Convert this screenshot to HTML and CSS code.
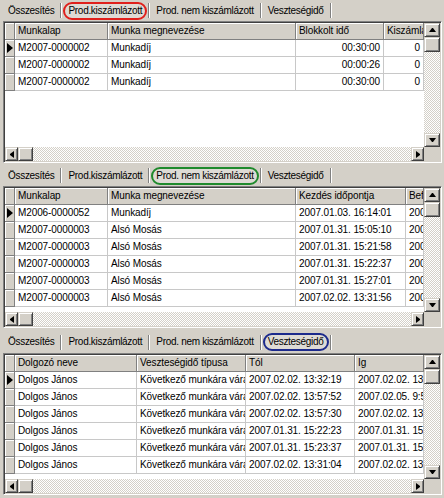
FILE: index.html
```html
<!DOCTYPE html>
<html lang="hu">
<head>
<meta charset="utf-8">
<title>Munkalapok</title>
<link rel="stylesheet" href="styles.css">
</head>
<body>
<div class="window">
  <section class="pane pane-1">
    <div class="tabs">
      <span class="tab">Összesítés</span><i class="sep"></i>
      <span class="tab sel sel-red">Prod.kiszámlázott</span><i class="sep"></i>
      <span class="tab">Prod. nem kiszámlázott</span><i class="sep"></i>
      <span class="tab">Veszteségidő</span><i class="sep"></i>
    </div>
    <div class="grid">
      <div class="grid-main">
        <div class="cells">
          <div class="row head"><div class="ind"></div><div class="c">Munkalap</div><div class="c">Munka megnevezése</div><div class="c">Blokkolt idő</div><div class="c">Kiszámlázott</div></div>
          <div class="row"><div class="ind cur"></div><div class="c">M2007-0000002</div><div class="c">Munkadíj</div><div class="c r">00:30:00</div><div class="c r">0</div></div>
          <div class="row"><div class="ind"></div><div class="c">M2007-0000002</div><div class="c">Munkadíj</div><div class="c r">00:00:26</div><div class="c r">0</div></div>
          <div class="row"><div class="ind"></div><div class="c">M2007-0000002</div><div class="c">Munkadíj</div><div class="c r">00:30:00</div><div class="c r">0</div></div>
        </div>
        <div class="vscroll"><div class="sbtn up"></div><div class="thumb"></div><div class="track"></div><div class="sbtn down"></div></div>
      </div>
      <div class="hscroll"><div class="sbtn left"></div><div class="thumb"></div><div class="track"></div><div class="sbtn right"></div><div class="corner"></div></div>
    </div>
  </section>

  <section class="pane pane-2">
    <div class="tabs">
      <span class="tab">Összesítés</span><i class="sep"></i>
      <span class="tab">Prod.kiszámlázott</span><i class="sep"></i>
      <span class="tab sel sel-green">Prod. nem kiszámlázott</span><i class="sep"></i>
      <span class="tab">Veszteségidő</span><i class="sep"></i>
    </div>
    <div class="grid">
      <div class="grid-main">
        <div class="cells">
          <div class="row head"><div class="ind"></div><div class="c">Munkalap</div><div class="c">Munka megnevezése</div><div class="c">Kezdés időpontja</div><div class="c">Befejezés időpontja</div></div>
          <div class="row"><div class="ind cur"></div><div class="c">M2006-0000052</div><div class="c">Munkadíj</div><div class="c">2007.01.03. 16:14:01</div><div class="c">2007.01.03. 16:44:01</div></div>
          <div class="row"><div class="ind"></div><div class="c">M2007-0000003</div><div class="c">Alsó Mosás</div><div class="c">2007.01.31. 15:05:10</div><div class="c">2007.01.31. 15:20:10</div></div>
          <div class="row"><div class="ind"></div><div class="c">M2007-0000003</div><div class="c">Alsó Mosás</div><div class="c">2007.01.31. 15:21:58</div><div class="c">2007.01.31. 15:22:30</div></div>
          <div class="row"><div class="ind"></div><div class="c">M2007-0000003</div><div class="c">Alsó Mosás</div><div class="c">2007.01.31. 15:22:37</div><div class="c">2007.01.31. 15:26:50</div></div>
          <div class="row"><div class="ind"></div><div class="c">M2007-0000003</div><div class="c">Alsó Mosás</div><div class="c">2007.01.31. 15:27:01</div><div class="c">2007.01.31. 15:40:01</div></div>
          <div class="row"><div class="ind"></div><div class="c">M2007-0000003</div><div class="c">Alsó Mosás</div><div class="c">2007.02.02. 13:31:56</div><div class="c">2007.02.02. 13:45:56</div></div>
        </div>
        <div class="vscroll"><div class="sbtn up"></div><div class="thumb"></div><div class="track"></div><div class="sbtn down"></div></div>
      </div>
      <div class="hscroll"><div class="sbtn left"></div><div class="thumb"></div><div class="track"></div><div class="sbtn right"></div><div class="corner"></div></div>
    </div>
  </section>

  <section class="pane pane-3">
    <div class="tabs">
      <span class="tab">Összesítés</span><i class="sep"></i>
      <span class="tab">Prod.kiszámlázott</span><i class="sep"></i>
      <span class="tab">Prod. nem kiszámlázott</span><i class="sep"></i>
      <span class="tab sel sel-blue">Veszteségidő</span><i class="sep"></i>
    </div>
    <div class="grid">
      <div class="grid-main">
        <div class="cells">
          <div class="row head"><div class="ind"></div><div class="c">Dolgozó neve</div><div class="c">Veszteségidő típusa</div><div class="c">Tól</div><div class="c">Ig</div></div>
          <div class="row"><div class="ind cur"></div><div class="c">Dolgos János</div><div class="c">Következő munkára várakozás</div><div class="c">2007.02.02. 13:32:19</div><div class="c">2007.02.02. 13:57:52</div></div>
          <div class="row"><div class="ind"></div><div class="c">Dolgos János</div><div class="c">Következő munkára várakozás</div><div class="c">2007.02.02. 13:57:52</div><div class="c">2007.02.05. 9:55:10</div></div>
          <div class="row"><div class="ind"></div><div class="c">Dolgos János</div><div class="c">Következő munkára várakozás</div><div class="c">2007.02.02. 13:57:30</div><div class="c">2007.02.02. 13:57:52</div></div>
          <div class="row"><div class="ind"></div><div class="c">Dolgos János</div><div class="c">Következő munkára várakozás</div><div class="c">2007.01.31. 15:22:23</div><div class="c">2007.01.31. 15:22:37</div></div>
          <div class="row"><div class="ind"></div><div class="c">Dolgos János</div><div class="c">Következő munkára várakozás</div><div class="c">2007.01.31. 15:23:37</div><div class="c">2007.01.31. 15:27:01</div></div>
          <div class="row"><div class="ind"></div><div class="c">Dolgos János</div><div class="c">Következő munkára várakozás</div><div class="c">2007.02.02. 13:31:04</div><div class="c">2007.02.02. 13:31:56</div></div>
        </div>
        <div class="vscroll"><div class="sbtn up"></div><div class="thumb"></div><div class="track"></div><div class="sbtn down"></div></div>
      </div>
      <div class="hscroll"><div class="sbtn left"></div><div class="thumb"></div><div class="track"></div><div class="sbtn right"></div><div class="corner"></div></div>
    </div>
  </section>
</div>
</body>
</html>
```

FILE: styles.css
```css
* { box-sizing: border-box; }
html, body { margin: 0; padding: 0; }
body {
  width: 444px;
  height: 498px;
  overflow: hidden;
  background: #d4d0c8;
  color: #000;
  font: 10px/1 "Liberation Sans", Arial, sans-serif;
}
.window {
  width: 444px;
  height: 498px;
  display: flex;
  flex-direction: column;
}
.pane { padding: 0 2px 0 3px; }
.pane-1 { margin-bottom: 2px; }
.pane-2 { margin-bottom: 3px; }

/* tabs */
.tabs {
  display: flex;
  align-items: center;
  height: 21px;
  padding-left: 0;
}
.pane-3 .tabs { height: 22px; }
.tab {
  height: 18px;
  line-height: 14px;
  padding: 0 3px;
  border: 2px solid transparent;
  letter-spacing: -0.3px;
  white-space: nowrap;
}
.sep {
  display: block;
  width: 2px;
  height: 15px;
  margin: 0 1px;
  border-left: 1px solid #808080;
  border-right: 1px solid #fff;
}
.tab.sel { border-radius: 9px; background: #dedbd5; }
.sel-red { border-color: #e0201c; }
.sel-green { border-color: #1f8a2c; }
.sel-blue { border-color: #1c2a8c; }

/* grid frame */
.grid {
  height: 142px;
  padding: 1px;
  border: 1px solid;
  border-color: #808080 #fff #fff #808080;
  box-shadow: inset 1px 1px #404040, inset -1px -1px #d4d0c8;
  display: flex;
  flex-direction: column;
}
.grid-main { flex: 1; display: flex; min-height: 0; }
.cells { flex: 1; background: #fff; overflow: hidden; }

.row { display: grid; height: 17px; }
.pane-1 .row { grid-template-columns: 10px 93px 188px 88px 40px; }
.pane-2 .row { grid-template-columns: 10px 93px 188px 110px 18px; }
.pane-3 .row { grid-template-columns: 10px 122px 109px 109px 69px; }

.c {
  padding: 0 3px;
  line-height: 16px;
  white-space: nowrap;
  overflow: hidden;
  letter-spacing: -0.1px;
  border-right: 1px solid #c8c8c8;
  border-bottom: 1px solid #c8c8c8;
}
.c.r { text-align: right; }
.head .c {
  background: #d4d0c8;
  border-color: #808080;
  box-shadow: inset 1px 1px #fff;
}
.ind {
  background: #d4d0c8;
  border-right: 1px solid #808080;
  border-bottom: 1px solid #808080;
  box-shadow: inset 1px 1px #fff;
  display: flex;
  align-items: center;
  justify-content: center;
}
.ind.cur::after {
  content: "";
  width: 0;
  height: 0;
  border-top: 5px solid transparent;
  border-bottom: 5px solid transparent;
  border-left: 6px solid #000;
}

/* scrollbars */
.vscroll { width: 16px; display: flex; flex-direction: column; }
.hscroll { height: 14px; display: flex; }
.sbtn, .thumb {
  background: #d4d0c8;
  border: 1px solid;
  border-color: #d4d0c8 #404040 #404040 #d4d0c8;
  box-shadow: inset 1px 1px #fff, inset -1px -1px #808080;
  display: flex;
  align-items: center;
  justify-content: center;
}
.vscroll .sbtn { height: 14px; }
.vscroll .thumb { height: 15px; }
.hscroll .sbtn { width: 13px; }
.hscroll .thumb { width: 15px; }
.track {
  flex: 1;
  background: repeating-conic-gradient(#fff 0 25%, #d4d0c8 0 50%) 0 0 / 2px 2px;
}
.corner { width: 16px; background: #d4d0c8; }

.sbtn::after { content: ""; width: 0; height: 0; }
.up::after { border-left: 3px solid transparent; border-right: 3px solid transparent; border-bottom: 4px solid #000; width: 1px; }
.down::after { border-left: 3px solid transparent; border-right: 3px solid transparent; border-top: 4px solid #000; width: 1px; }
.left::after { border-top: 3px solid transparent; border-bottom: 3px solid transparent; border-right: 4px solid #000; height: 1px; }
.right::after { border-top: 3px solid transparent; border-bottom: 3px solid transparent; border-left: 4px solid #000; height: 1px; }
```
